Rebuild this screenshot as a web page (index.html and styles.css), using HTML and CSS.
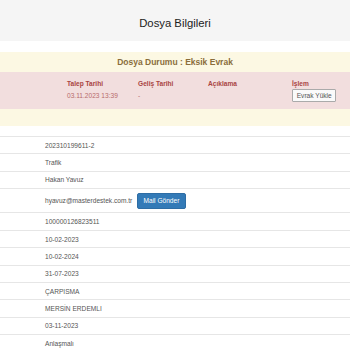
FILE: index.html
```html
<!DOCTYPE html>
<html lang="tr">
<head>
<meta charset="utf-8">
<title>Dosya Bilgileri</title>
<link rel="stylesheet" href="styles.css">
</head>
<body>
<div class="page-header">
  <h3 class="page-title">Dosya Bilgileri</h3>
</div>
<div class="status-box">
  <h4 class="status-title">Dosya Durumu : Eksik Evrak</h4>
  <div class="status-row">
    <div class="status-cell"></div>
    <div class="status-cell"><div class="s-label">Talep Tarihi</div><div class="s-value">03.11.2023 13:39</div></div>
    <div class="status-cell"><div class="s-label">Geliş Tarihi</div><div class="s-value">-</div></div>
    <div class="status-cell"><div class="s-label">Açıklama</div><div class="s-value"></div></div>
    <div class="status-cell"><div class="s-label">İşlem</div><button class="btn-default">Evrak Yükle</button></div>
  </div>
</div>
<div class="info-table">
  <div class="info-row"><div class="info-label"></div><div class="info-value">202310199611-2</div></div>
  <div class="info-row"><div class="info-label"></div><div class="info-value">Trafik</div></div>
  <div class="info-row"><div class="info-label"></div><div class="info-value">Hakan Yavuz</div></div>
  <div class="info-row"><div class="info-label"></div><div class="info-value">hyavuz@masterdestek.com.tr <button class="btn-primary">Mail Gönder</button></div></div>
  <div class="info-row"><div class="info-label"></div><div class="info-value">100000126823511</div></div>
  <div class="info-row"><div class="info-label"></div><div class="info-value">10-02-2023</div></div>
  <div class="info-row"><div class="info-label"></div><div class="info-value">10-02-2024</div></div>
  <div class="info-row"><div class="info-label"></div><div class="info-value">31-07-2023</div></div>
  <div class="info-row"><div class="info-label"></div><div class="info-value">ÇARPISMA</div></div>
  <div class="info-row"><div class="info-label"></div><div class="info-value">MERSİN ERDEMLI</div></div>
  <div class="info-row"><div class="info-label"></div><div class="info-value">03-11-2023</div></div>
  <div class="info-row"><div class="info-label"></div><div class="info-value">Anlaşmalı</div></div>
</div>
</body>
</html>
```
FILE: styles.css
```css
html, body {
  margin: 0;
  padding: 0;
  background: #fff;
  font-family: "Liberation Sans", Arial, sans-serif;
  font-size: 6.6px;
  color: #555;
}

.page-header {
  background: #f5f5f5;
  height: 41px;
  display: flex;
  align-items: center;
  justify-content: center;
}

.page-title {
  margin: 4px 0 0 0;
  font-size: 11.3px;
  font-weight: normal;
  color: #222;
}

.status-box {
  margin-top: 10.7px;
  background: #fcf8e3;
  padding-bottom: 16.7px;
}

.status-title {
  margin: 0;
  height: 20.6px;
  line-height: 20.6px;
  text-align: center;
  font-size: 8.5px;
  font-weight: bold;
  color: #8a6d3b;
}

.status-row {
  background: #f2dede;
  height: 37px;
  display: grid;
  grid-template-columns: 67px 71px 70px 84px 1fr;
  color: #a94442;
  box-sizing: border-box;
  padding-top: 6.5px;
}

.s-label {
  font-weight: bold;
  line-height: 9px;
}

.s-value {
  margin-top: 3px;
  line-height: 9px;
  color: #b86c6c;
}

.btn-default {
  margin-top: 1px;
  font-family: inherit;
  font-size: 6.6px;
  color: #555;
  background: #fafafa;
  border: 1px solid #aaa;
  border-radius: 1px;
  padding: 2px 3.7px;
  line-height: 7.5px;
}

.info-table {
  margin-top: 10px;
}

.info-row {
  display: flex;
  border-top: 1px solid #e6e6e6;
}

.info-label {
  width: 41.3px;
  flex: none;
}

.info-value {
  padding: 3.7px;
  line-height: 9px;
  display: flex;
  align-items: center;
  gap: 5px;
}

.btn-primary {
  font-family: inherit;
  font-size: 6.6px;
  color: #fff;
  background: #337ab7;
  border: 1px solid #2e6da4;
  border-radius: 2px;
  padding: 2.5px 5.2px;
  line-height: 9px;
}
```
